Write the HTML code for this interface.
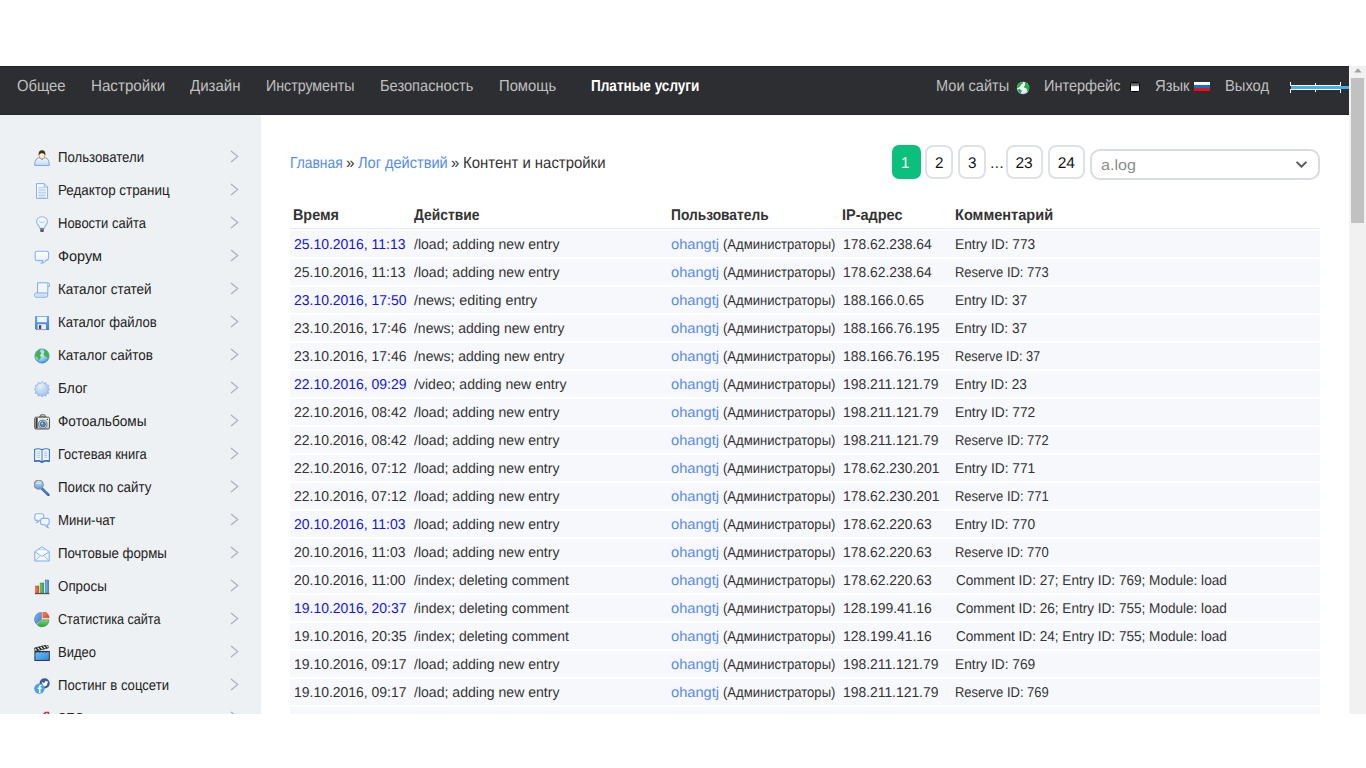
<!DOCTYPE html>
<html lang="ru"><head><meta charset="utf-8"><title>Лог действий</title>
<style>
html,body{margin:0;padding:0;background:#fff;overflow:hidden}
body{width:1366px;height:768px;position:relative;font-family:"Liberation Sans",sans-serif}
#vp{position:absolute;left:0;top:66px;width:1366px;height:648px;overflow:hidden;background:#fff}
#pg{position:absolute;left:0;top:-66px;width:1349px;height:900px}
.t{position:absolute;white-space:pre;line-height:20px;height:20px;transform-origin:0 50%;display:block;text-rendering:geometricPrecision}
#hdr{position:absolute;left:0;top:66px;width:1349px;height:48.5px;background:#2d2e32;box-shadow:inset 0 1px 0 #232427, inset 0 -1px 0 #26272a}
#side{position:absolute;left:0;top:114.5px;width:261px;height:700px;background:#eef1f3}
.rw{position:absolute;left:290px;width:1030px;background:#f7f8fc}
#thl{position:absolute;left:290px;width:1030px;top:228px;height:1px;background:#e6e8ee}
.chev{position:absolute;left:230px}
.pb{position:absolute;top:145px;height:30px;border:2px solid #dfe1e9;border-radius:8px;background:#fff;box-sizing:content-box}
#p1{position:absolute;left:892px;top:145px;width:29px;height:34px;border-radius:7px;background:#0bbf7d}
#sel{position:absolute;left:1090px;top:149px;width:225.5px;height:27px;border:2px solid #d9dbe3;border-radius:10px;background:#fff}
#sb{position:absolute;left:1349px;top:0;width:17px;height:648px;background:#f1f1f1;border-left:1px solid #f5f5f5;box-sizing:border-box}
#th{position:absolute;left:1351px;top:12px;width:13px;height:145px;background:#c1c1c1}
.ic{position:absolute}
</style></head><body>
<div id="vp"><div id="pg">
<div id="side"></div>
<div id="hdr"></div>
<div id="thl"></div><div class="rw" style="top:229px;height:2px;background:#fbfcfe"></div>
<div class="rw" style="top:231px;height:26px"></div>
<div class="rw" style="top:259px;height:26px"></div>
<div class="rw" style="top:287px;height:26px"></div>
<div class="rw" style="top:315px;height:26px"></div>
<div class="rw" style="top:343px;height:26px"></div>
<div class="rw" style="top:371px;height:26px"></div>
<div class="rw" style="top:399px;height:26px"></div>
<div class="rw" style="top:427px;height:26px"></div>
<div class="rw" style="top:455px;height:26px"></div>
<div class="rw" style="top:483px;height:26px"></div>
<div class="rw" style="top:511px;height:26px"></div>
<div class="rw" style="top:539px;height:26px"></div>
<div class="rw" style="top:567px;height:26px"></div>
<div class="rw" style="top:595px;height:26px"></div>
<div class="rw" style="top:623px;height:26px"></div>
<div class="rw" style="top:651px;height:26px"></div>
<div class="rw" style="top:679px;height:26px"></div>
<div class="rw" style="top:707px;height:26px"></div>
<svg class="chev" style="top:150.2px" width="9" height="13" viewBox="0 0 9 13"><path d="M1 0.9 L7.7 6.4 L1 11.9" fill="none" stroke="#adb0c0" stroke-width="1.3"/></svg>
<svg class="chev" style="top:183.2px" width="9" height="13" viewBox="0 0 9 13"><path d="M1 0.9 L7.7 6.4 L1 11.9" fill="none" stroke="#adb0c0" stroke-width="1.3"/></svg>
<svg class="chev" style="top:216.2px" width="9" height="13" viewBox="0 0 9 13"><path d="M1 0.9 L7.7 6.4 L1 11.9" fill="none" stroke="#adb0c0" stroke-width="1.3"/></svg>
<svg class="chev" style="top:249.2px" width="9" height="13" viewBox="0 0 9 13"><path d="M1 0.9 L7.7 6.4 L1 11.9" fill="none" stroke="#adb0c0" stroke-width="1.3"/></svg>
<svg class="chev" style="top:282.2px" width="9" height="13" viewBox="0 0 9 13"><path d="M1 0.9 L7.7 6.4 L1 11.9" fill="none" stroke="#adb0c0" stroke-width="1.3"/></svg>
<svg class="chev" style="top:315.2px" width="9" height="13" viewBox="0 0 9 13"><path d="M1 0.9 L7.7 6.4 L1 11.9" fill="none" stroke="#adb0c0" stroke-width="1.3"/></svg>
<svg class="chev" style="top:348.2px" width="9" height="13" viewBox="0 0 9 13"><path d="M1 0.9 L7.7 6.4 L1 11.9" fill="none" stroke="#adb0c0" stroke-width="1.3"/></svg>
<svg class="chev" style="top:381.2px" width="9" height="13" viewBox="0 0 9 13"><path d="M1 0.9 L7.7 6.4 L1 11.9" fill="none" stroke="#adb0c0" stroke-width="1.3"/></svg>
<svg class="chev" style="top:414.2px" width="9" height="13" viewBox="0 0 9 13"><path d="M1 0.9 L7.7 6.4 L1 11.9" fill="none" stroke="#adb0c0" stroke-width="1.3"/></svg>
<svg class="chev" style="top:447.2px" width="9" height="13" viewBox="0 0 9 13"><path d="M1 0.9 L7.7 6.4 L1 11.9" fill="none" stroke="#adb0c0" stroke-width="1.3"/></svg>
<svg class="chev" style="top:480.2px" width="9" height="13" viewBox="0 0 9 13"><path d="M1 0.9 L7.7 6.4 L1 11.9" fill="none" stroke="#adb0c0" stroke-width="1.3"/></svg>
<svg class="chev" style="top:513.2px" width="9" height="13" viewBox="0 0 9 13"><path d="M1 0.9 L7.7 6.4 L1 11.9" fill="none" stroke="#adb0c0" stroke-width="1.3"/></svg>
<svg class="chev" style="top:546.2px" width="9" height="13" viewBox="0 0 9 13"><path d="M1 0.9 L7.7 6.4 L1 11.9" fill="none" stroke="#adb0c0" stroke-width="1.3"/></svg>
<svg class="chev" style="top:579.2px" width="9" height="13" viewBox="0 0 9 13"><path d="M1 0.9 L7.7 6.4 L1 11.9" fill="none" stroke="#adb0c0" stroke-width="1.3"/></svg>
<svg class="chev" style="top:612.2px" width="9" height="13" viewBox="0 0 9 13"><path d="M1 0.9 L7.7 6.4 L1 11.9" fill="none" stroke="#adb0c0" stroke-width="1.3"/></svg>
<svg class="chev" style="top:645.2px" width="9" height="13" viewBox="0 0 9 13"><path d="M1 0.9 L7.7 6.4 L1 11.9" fill="none" stroke="#adb0c0" stroke-width="1.3"/></svg>
<svg class="chev" style="top:678.2px" width="9" height="13" viewBox="0 0 9 13"><path d="M1 0.9 L7.7 6.4 L1 11.9" fill="none" stroke="#adb0c0" stroke-width="1.3"/></svg>
<svg class="chev" style="top:711.2px" width="9" height="13" viewBox="0 0 9 13"><path d="M1 0.9 L7.7 6.4 L1 11.9" fill="none" stroke="#adb0c0" stroke-width="1.3"/></svg>
<div id="p1"></div>
<div class="pb" style="left:925px;width:24px"></div>
<div class="pb" style="left:958px;width:24px"></div>
<div class="pb" style="left:1006px;width:33px"></div>
<div class="pb" style="left:1048px;width:33px"></div>
<div id="sel"></div>
<svg class="ic" style="left:1295.4px;top:160px" width="13" height="9" viewBox="0 0 13 9"><path d="M1.6 1.9 L6.5 6.6 L11.4 1.9" fill="none" stroke="#555" stroke-width="1.9"/></svg>
<svg class="ic" style="left:1016px;top:81px" width="14" height="14" viewBox="0 0 14 14"><defs><radialGradient id="hg" cx="0.45" cy="0.4" r="0.65"><stop offset="0" stop-color="#ffffff"/><stop offset="0.7" stop-color="#e4e6fb"/><stop offset="1" stop-color="#b9bde6"/></radialGradient></defs>
<circle cx="7.1" cy="7" r="6.2" fill="url(#hg)"/>
<path d="M1.4 4.6 Q2.6 2 5 1.2 L6.4 1 Q7.6 1.6 6.6 2.6 L5 3.4 L4.4 5 L2.8 6.4 L1 7.2 Q0.9 5.8 1.4 4.6 Z" fill="#16b436"/>
<path d="M8.6 1.4 Q11 1.6 12.6 4 Q13.6 6.4 13 8.6 L12 10.4 L11 9.6 L10.6 7.6 L8.4 6.8 L8 5.4 L9.4 4 Z" fill="#16b436"/>
<path d="M1.6 8.6 L3.4 8 L5.4 9 L5.6 10.6 L4.6 12.4 Q2.6 11.4 1.6 8.6 Z" fill="#16b436"/></svg>
<svg class="ic" style="left:1130px;top:82px" width="10" height="10" viewBox="0 0 10 10"><defs><linearGradient id="wg" x1="0" y1="0" x2="0" y2="1"><stop offset="0" stop-color="#4c4c4c"/><stop offset="1" stop-color="#858585"/></linearGradient></defs>
<rect x="0.5" y="0.5" width="9" height="9" rx="1.2" fill="#fff" stroke="#000" stroke-width="1"/><rect x="1" y="1" width="8" height="3.2" fill="url(#wg)"/></svg>
<div class="ic" style="left:1194px;top:81.7px;width:16.2px;height:9.6px;background:linear-gradient(#fff 0,#fff 34%,#0d6fe0 34%,#0d6fe0 66%,#ff0a0a 66%,#ff0a0a 100%)"></div>
<div class="ic" style="left:1290px;top:82px;width:1.4px;height:11.2px;background:#fff"></div>
<div class="ic" style="left:1314.8px;top:82.8px;width:1.4px;height:9.4px;background:#fff"></div>
<div class="ic" style="left:1339.7px;top:82px;width:1.4px;height:11.2px;background:#fff"></div>
<div class="ic" style="left:1290px;top:85px;width:51px;height:5px;background:#fff"></div>
<div class="ic" style="left:1290px;top:86px;width:1.2px;height:3px;background:#2d2e32"></div>
<div class="ic" style="left:1291px;top:86px;width:60px;height:3px;background:#45b0ec"></div>
<svg class="ic" style="left:34px;top:150px" width="16" height="16" viewBox="0 0 16 16"><defs><linearGradient id="gu" x1="0" y1="0" x2="0" y2="1"><stop offset="0" stop-color="#f4f9ff"/><stop offset="1" stop-color="#c3dcf7"/></linearGradient></defs><path d="M0.7 15.4 L1.2 11.4 Q1.6 8.2 5 7.6 L8 9.6 L11 7.6 Q14.4 8.2 14.8 11.4 L15.3 15.4 Z" fill="url(#gu)" stroke="#7ba6e2" stroke-width="1"/>
<ellipse cx="8" cy="5.6" rx="2.9" ry="3.3" fill="#fdeee2" stroke="#e8853a" stroke-width="0.9"/>
<path d="M4.6 5.2 Q4.2 0.2 8 0.2 Q11.8 0.2 11.4 5.2 Q10.4 3 8 3.2 Q5.6 3 4.6 5.2 Z" fill="#3d3418"/></svg>
<svg class="ic" style="left:34px;top:183px" width="16" height="16" viewBox="0 0 16 16"><path d="M2.5 0.6 H10.2 L13.6 4 V15.4 H2.5 Z" fill="#f6fafe" stroke="#79a8e4" stroke-width="0.9"/>
<path d="M10.2 0.6 V4 H13.6" fill="#dbe9fa" stroke="#79a8e4" stroke-width="0.8"/>
<path d="M4.3 4.6 H9.4 M4.3 6.2 H11.8 M4.3 7.8 H11.8 M4.3 9.4 H11.8 M4.3 11 H11.8 M4.3 12.6 H11.8 M4.3 14.1 H11.8" stroke="#a4c4ec" stroke-width="0.8"/></svg>
<svg class="ic" style="left:34px;top:216px" width="16" height="16" viewBox="0 0 16 16"><path d="M8 0.7 C4.4 0.7 2.6 3.2 2.6 5.8 C2.6 8.6 5.4 9.6 5.9 12.2 H10.1 C10.6 9.6 13.4 8.6 13.4 5.8 C13.4 3.2 11.6 0.7 8 0.7 Z" fill="#f2f8ff" stroke="#86b4ee" stroke-width="1.1"/>
<path d="M5.2 5.6 Q8 8 10.8 5.6" fill="none" stroke="#9cc3f2" stroke-width="0.9"/>
<rect x="6" y="12.2" width="4" height="2.4" fill="#a8a8a8"/><rect x="6.4" y="14.2" width="3.2" height="1.6" fill="#333"/>
<path d="M6 12.6 H10 M6 13.8 H10" stroke="#555" stroke-width="0.6"/></svg>
<svg class="ic" style="left:34px;top:249px" width="16" height="16" viewBox="0 0 16 16"><defs><linearGradient id="gb" x1="0" y1="0" x2="0" y2="1"><stop offset="0" stop-color="#ffffff"/><stop offset="1" stop-color="#dcebfb"/></linearGradient></defs><path transform="translate(0,0.8)" d="M3.4 1.4 H12.6 Q14.6 1.4 14.6 3.6 V7.6 Q14.6 10.2 12 10.6 Q11 13 7.6 13.4 Q9 12 8.8 10.8 H3.4 Q1.2 10.8 1.2 8.4 V3.6 Q1.2 1.4 3.4 1.4 Z" fill="url(#gb)" stroke="#86b4ee" stroke-width="1.1"/></svg>
<svg class="ic" style="left:34px;top:282px" width="16" height="16" viewBox="0 0 16 16"><path d="M3.6 0.8 H13.6 Q15.6 0.8 15.6 2.8 V4.4 H13.8 V11.4 H3.6 Z" fill="#f2f7fe" stroke="#7fabea" stroke-width="1"/>
<path d="M13.8 1.2 V4.4" stroke="#7fabea" stroke-width="0.9"/>
<path d="M1.8 11 H12.2 Q13.8 11 13.8 12.9 Q13.8 15.2 12 15.2 H2 Q0.6 15.2 0.6 13.2 Q0.6 11 1.8 11 Z" fill="#e6f0fc" stroke="#7fabea" stroke-width="1"/>
<path d="M2 13.1 H12" stroke="#a9c8f0" stroke-width="0.8"/></svg>
<svg class="ic" style="left:34px;top:315px" width="16" height="16" viewBox="0 0 16 16"><defs><linearGradient id="gf" x1="0" y1="0" x2="0" y2="1"><stop offset="0" stop-color="#6fa6e4"/><stop offset="1" stop-color="#3f7fcf"/></linearGradient></defs><path d="M1 1 H15.1 V15 H2.4 L1 13.6 Z" fill="url(#gf)"/>
<rect x="3.2" y="1.8" width="9.6" height="5.4" fill="#eef5fd"/>
<rect x="3.6" y="9.2" width="8.4" height="5.8" fill="#ececec"/>
<rect x="5" y="10.2" width="2.2" height="4" fill="#2a4a78"/>
<path d="M3.6 14.6 H12.2" stroke="#8a8a8a" stroke-width="0.8"/></svg>
<svg class="ic" style="left:34px;top:348px" width="16" height="16" viewBox="0 0 16 16"><defs><radialGradient id="gg" cx="0.4" cy="0.35" r="0.7"><stop offset="0" stop-color="#d6f0fc"/><stop offset="0.6" stop-color="#8ccaee"/><stop offset="1" stop-color="#3f94d3"/></radialGradient></defs><circle cx="8" cy="8" r="7.1" fill="url(#gg)" stroke="#3b7fb8" stroke-width="0.7"/>
<path d="M2.2 4.4 Q4.2 1.6 7 1.2 L6 3.6 L7.6 5.2 L6 7.2 L7 9.4 L4.8 12.4 L3.6 9.6 L1.4 8.6 Q1.2 6 2.2 4.4 Z" fill="#45b245"/>
<path d="M9.6 1.2 Q13 2 14.6 5.6 Q15.4 8.4 14.2 10.8 L12.6 8.8 L10.8 8.2 L9.6 5.8 L10.6 4 Z" fill="#45b245"/>
<path d="M6.4 14.8 Q9 12.6 11.8 13.8 Q9.4 15.6 6.4 14.8 Z" fill="#3a8fcc"/></svg>
<svg class="ic" style="left:34px;top:381px" width="16" height="16" viewBox="0 0 16 16"><defs><radialGradient id="gs" cx="0.4" cy="0.3" r="0.8"><stop offset="0" stop-color="#e8f0fb"/><stop offset="0.75" stop-color="#a9c5ec"/><stop offset="1" stop-color="#8db2e7"/></radialGradient></defs><polygon points="15.80,8.30 13.89,9.88 14.75,12.20 12.31,12.61 11.90,15.05 9.58,14.19 8.00,16.10 6.42,14.19 4.10,15.05 3.69,12.61 1.25,12.20 2.11,9.88 0.20,8.30 2.11,6.72 1.25,4.40 3.69,3.99 4.10,1.55 6.42,2.41 8.00,0.50 9.58,2.41 11.90,1.55 12.31,3.99 14.75,4.40 13.89,6.72" fill="url(#gs)" stroke="#86ace4" stroke-width="0.7"/></svg>
<svg class="ic" style="left:34px;top:414px" width="16" height="16" viewBox="0 0 16 16"><defs><linearGradient id="gc" x1="0" y1="0" x2="0" y2="1"><stop offset="0" stop-color="#f6f6f6"/><stop offset="1" stop-color="#c4c4c4"/></linearGradient></defs><path d="M5.6 2.8 L6.8 0.8 H10.6 L11.8 2.8 Z" fill="#dcdcdc" stroke="#444" stroke-width="0.8"/>
<rect x="0.7" y="3.2" width="14.8" height="11.8" rx="1.2" fill="url(#gc)" stroke="#444" stroke-width="0.9"/>
<rect x="1.6" y="4" width="2" height="10.2" fill="#3a3a3a"/>
<circle cx="8.8" cy="10.2" r="4.1" fill="#e8e8e8" stroke="#555" stroke-width="0.8"/>
<circle cx="8.8" cy="10.2" r="2.6" fill="#3d86d8" stroke="#234f86" stroke-width="0.7"/>
<circle cx="8.2" cy="9.5" r="0.9" fill="#bfe0ff"/>
<circle cx="13.4" cy="5.4" r="0.7" fill="#444"/></svg>
<svg class="ic" style="left:34px;top:447px" width="16" height="16" viewBox="0 0 16 16"><g transform="translate(0,0.8)"><path d="M0.6 1.6 Q4.6 0 8 2 Q11.4 0 15.4 1.6 V13.4 Q11.4 12 8 14 Q4.6 12 0.6 13.4 Z" fill="#f4f8fe" stroke="#3c78c2" stroke-width="1.1"/>
<path d="M8 2 V14" stroke="#3c78c2" stroke-width="1"/>
<path d="M2.6 4 H6.2 M2.6 5.8 H6.2 M2.6 7.6 H6.2 M2.6 9.4 H6.2 M9.8 4 H13.4 M9.8 5.8 H13.4 M9.8 7.6 H13.4 M9.8 9.4 H13.4" stroke="#a9c3e6" stroke-width="0.9"/>
<path d="M0.6 13.6 Q4.6 12.4 8 14.6 Q11.4 12.4 15.4 13.6" fill="none" stroke="#2f66ad" stroke-width="1.2"/></g></svg>
<svg class="ic" style="left:34px;top:480px" width="16" height="16" viewBox="0 0 16 16"><defs><linearGradient id="gm" x1="0" y1="0" x2="0" y2="1"><stop offset="0" stop-color="#cfe4fb"/><stop offset="1" stop-color="#5b9bee"/></linearGradient></defs><g transform="translate(-0.6,-0.9)"><path d="M8.4 9.4 L15 15.8" stroke="#2d69ad" stroke-width="2.6" stroke-linecap="round"/>
<path d="M8.8 9.8 L13.6 14.2" stroke="#6aa5e0" stroke-width="0.8" stroke-linecap="round"/>
<circle cx="5.3" cy="5.6" r="4.5" fill="url(#gm)" stroke="#8c8c8c" stroke-width="1.2"/>
<path d="M2.6 5 Q5.2 2.2 8 5" fill="#e4f1ff" opacity="0.85"/></g></svg>
<svg class="ic" style="left:34px;top:513px" width="16" height="16" viewBox="0 0 16 16"><path d="M2.8 0.8 H7.6 Q9.6 0.8 9.6 2.8 V5.4 Q9.6 7.4 7.6 7.4 H5.4 Q5 9 3 9.4 Q3.8 8.4 3.6 7.4 H2.8 Q0.8 7.4 0.8 5.4 V2.8 Q0.8 0.8 2.8 0.8 Z" fill="#f4f9ff" stroke="#86b4ee" stroke-width="1.1"/>
<path d="M8.6 5.4 H13.2 Q15.2 5.4 15.2 7.4 V9.8 Q15.2 11.8 13.2 11.8 Q13.2 13.4 14.2 14.6 Q11.8 14 11 11.8 H8.6 Q6.6 11.8 6.6 9.8 V7.4 Q6.6 5.4 8.6 5.4 Z" fill="#eef5fe" stroke="#86b4ee" stroke-width="1.1"/></svg>
<svg class="ic" style="left:34px;top:546px" width="16" height="16" viewBox="0 0 16 16"><path d="M0.8 5.6 L8 0.8 L15.2 5.6 V15 H0.8 Z" fill="#f1f7fe" stroke="#7fabea" stroke-width="1"/>
<path d="M2.8 6.8 V3.8 H13.2 V6.8" fill="#ffffff" stroke="#9cc0f0" stroke-width="0.8"/>
<path d="M0.8 5.8 L8 10.4 L15.2 5.8" fill="#f8fbff" stroke="#7fabea" stroke-width="0.9"/>
<path d="M0.8 15 L6.4 9.4 M15.2 15 L9.6 9.4" stroke="#8fb6ec" stroke-width="0.9"/></svg>
<svg class="ic" style="left:34px;top:579px" width="16" height="16" viewBox="0 0 16 16"><defs><linearGradient id="br" x1="0" y1="0" x2="1" y2="0"><stop offset="0" stop-color="#ff8a5c"/><stop offset="1" stop-color="#e4381a"/></linearGradient>
<linearGradient id="bg" x1="0" y1="0" x2="1" y2="0"><stop offset="0" stop-color="#7ad27a"/><stop offset="1" stop-color="#2f9a35"/></linearGradient>
<linearGradient id="bb" x1="0" y1="0" x2="1" y2="0"><stop offset="0" stop-color="#8fbcf0"/><stop offset="1" stop-color="#3f7fcf"/></linearGradient></defs><rect x="1.4" y="7" width="3.4" height="7" fill="url(#br)" stroke="#c83a1a" stroke-width="0.5"/>
<rect x="6.1" y="4" width="3.7" height="10" fill="url(#bg)" stroke="#2e8a2e" stroke-width="0.5"/>
<rect x="11.2" y="1" width="3.5" height="13" fill="url(#bb)" stroke="#2f66ad" stroke-width="0.5"/>
<rect x="0.8" y="14" width="14.6" height="1.2" fill="#555"/></svg>
<svg class="ic" style="left:34px;top:612px" width="16" height="16" viewBox="0 0 16 16"><defs><linearGradient id="pb" x1="0" y1="0" x2="1" y2="1"><stop offset="0" stop-color="#8db6ea"/><stop offset="1" stop-color="#3f78c8"/></linearGradient>
<linearGradient id="pr" x1="0" y1="0" x2="1" y2="1"><stop offset="0" stop-color="#ff8f66"/><stop offset="1" stop-color="#e43a1c"/></linearGradient>
<linearGradient id="pgn" x1="0" y1="0" x2="0" y2="1"><stop offset="0" stop-color="#7fd67f"/><stop offset="1" stop-color="#2f9a35"/></linearGradient></defs><g transform="translate(0,-1.2)"><path d="M7.4 8.6 V1.6 A7 7 0 0 0 2.2 13.2 Z" fill="url(#pb)" stroke="#3c70b8" stroke-width="0.5"/>
<path d="M8.8 7 V0.8 A6.6 6.6 0 0 1 15.2 7 Z" fill="url(#pr)" stroke="#d03a1c" stroke-width="0.5"/>
<path d="M8 9 H15 A7 7 0 0 1 3 14 Z" fill="url(#pgn)" stroke="#2f8f35" stroke-width="0.5"/></g></svg>
<svg class="ic" style="left:34px;top:645px" width="16" height="16" viewBox="0 0 16 16"><defs><linearGradient id="cl" x1="0" y1="0" x2="1" y2="1"><stop offset="0" stop-color="#6fc0fa"/><stop offset="1" stop-color="#2f86e0"/></linearGradient></defs><g transform="rotate(-14 1.2 6.2)"><rect x="1.2" y="3" width="13.6" height="3.2" fill="#fff" stroke="#222" stroke-width="0.7"/>
<path d="M2.6 3 L4.6 6.2 M5.6 3 L7.6 6.2 M8.6 3 L10.6 6.2 M11.6 3 L13.6 6.2" stroke="#222" stroke-width="1.5"/></g>
<rect x="0.9" y="6.4" width="14.4" height="9" fill="url(#cl)" stroke="#222" stroke-width="0.9"/>
<path d="M1.4 8.6 H14.8" stroke="#1a1a1a" stroke-width="0.5" opacity="0.0"/>
<path d="M1.6 6.9 H14.6" stroke="#222" stroke-width="1.4" stroke-dasharray="1.7 1.5"/></svg>
<svg class="ic" style="left:34px;top:678px" width="16" height="16" viewBox="0 0 16 16"><circle cx="10.6" cy="5.4" r="5.1" fill="#3b5a9a"/>
<path d="M7.8 3.4 Q9 5 10.6 5 Q10.4 3.2 12 3 Q12.8 3 13.2 3.5 L14 3.2 L13.6 4 L14.2 4.2 L13.5 4.7 Q13.4 7.8 10.6 8.4 Q8.8 8.6 7.6 7.8 Q8.8 7.8 9.4 7.2 Q8.4 7 8.2 6.2 H8.8 Q7.8 5.6 7.8 3.4 Z" fill="#fff"/>
<circle cx="5.4" cy="10.6" r="5.2" fill="#4aa3e2"/>
<path d="M4.9 15 V10.9 H3.6 V9.5 H4.9 V8.5 Q4.9 6.7 6.7 6.7 H7.7 V8.1 H7 Q6.5 8.1 6.5 8.7 V9.5 H7.7 L7.5 10.9 H6.5 V15 Z" fill="#fff"/></svg>
<svg class="ic" style="left:34px;top:711px" width="16" height="16" viewBox="0 0 16 16"><path d="M7.6 4.4 L11.2 0.8 L15.2 0.8 L15.2 5 L11.6 8.4 Z" fill="#d8283a"/><circle cx="12.8" cy="3.2" r="1.1" fill="#fff"/>
<path d="M7.8 4.2 L4 4.6 L2 7 L6 7.4 Z" fill="#8a8a8a"/></svg>
<span class="t" style="left:16.85px;top:77px;font-size:16px;color:#c0c0c0;transform:scaleX(0.9276)">Общее</span>
<span class="t" style="left:90.68px;top:77px;font-size:16px;color:#c0c0c0;transform:scaleX(0.9468)">Настройки</span>
<span class="t" style="left:190.00px;top:77px;font-size:16px;color:#c0c0c0;transform:scaleX(0.9398)">Дизайн</span>
<span class="t" style="left:265.55px;top:77px;font-size:16px;color:#c0c0c0;transform:scaleX(0.8873)">Инструменты</span>
<span class="t" style="left:379.72px;top:77px;font-size:16px;color:#c0c0c0;transform:scaleX(0.9141)">Безопасность</span>
<span class="t" style="left:498.71px;top:77px;font-size:16px;color:#c0c0c0;transform:scaleX(0.9244)">Помощь</span>
<span class="t" style="left:591.15px;top:77px;font-size:16px;color:#ffffff;transform:scaleX(0.8477);font-weight:700">Платные услуги</span>
<span class="t" style="left:935.63px;top:77px;font-size:16px;color:#c0c0c0;transform:scaleX(0.9104)">Мои сайты</span>
<span class="t" style="left:1043.93px;top:77px;font-size:16px;color:#c0c0c0;transform:scaleX(0.9069)">Интерфейс</span>
<span class="t" style="left:1155.08px;top:77px;font-size:16px;color:#c0c0c0;transform:scaleX(0.9235)">Язык</span>
<span class="t" style="left:1225.31px;top:77px;font-size:16px;color:#c0c0c0;transform:scaleX(0.9199)">Выход</span>
<span class="t" style="left:289.98px;top:154px;font-size:16px;color:#588bee;transform:scaleX(0.8654)">Главная</span>
<span class="t" style="left:345.97px;top:154px;font-size:16px;color:#333;transform:scaleX(0.9499)">»</span>
<span class="t" style="left:358.40px;top:154px;font-size:16px;color:#588bee;transform:scaleX(0.9104)">Лог действий</span>
<span class="t" style="left:451.49px;top:154px;font-size:16px;color:#333;transform:scaleX(0.9235)">»</span>
<span class="t" style="left:463.10px;top:154px;font-size:16px;color:#333;transform:scaleX(0.9322)">Контент и настройки</span>
<span class="t" style="left:57.65px;top:148px;font-size:14.5px;color:#222;transform:scaleX(0.9094)">Пользователи</span>
<span class="t" style="left:57.62px;top:181px;font-size:14.5px;color:#222;transform:scaleX(0.9229)">Редактор страниц</span>
<span class="t" style="left:57.64px;top:214px;font-size:14.5px;color:#222;transform:scaleX(0.8966)">Новости сайта</span>
<span class="t" style="left:57.85px;top:247px;font-size:14.5px;color:#222;transform:scaleX(0.9989)">Форум</span>
<span class="t" style="left:57.61px;top:280px;font-size:14.5px;color:#222;transform:scaleX(0.9279)">Каталог статей</span>
<span class="t" style="left:57.63px;top:313px;font-size:14.5px;color:#222;transform:scaleX(0.9034)">Каталог файлов</span>
<span class="t" style="left:57.61px;top:346px;font-size:14.5px;color:#222;transform:scaleX(0.9254)">Каталог сайтов</span>
<span class="t" style="left:57.59px;top:379px;font-size:14.5px;color:#222;transform:scaleX(0.9445)">Блог</span>
<span class="t" style="left:57.89px;top:412px;font-size:14.5px;color:#222;transform:scaleX(0.9404)">Фотоальбомы</span>
<span class="t" style="left:57.65px;top:445px;font-size:14.5px;color:#222;transform:scaleX(0.8899)">Гостевая книга</span>
<span class="t" style="left:57.64px;top:478px;font-size:14.5px;color:#222;transform:scaleX(0.9189)">Поиск по сайту</span>
<span class="t" style="left:57.63px;top:511px;font-size:14.5px;color:#222;transform:scaleX(0.9098)">Мини-чат</span>
<span class="t" style="left:57.65px;top:544px;font-size:14.5px;color:#222;transform:scaleX(0.9148)">Почтовые формы</span>
<span class="t" style="left:58.01px;top:577px;font-size:14.5px;color:#222;transform:scaleX(0.9210)">Опросы</span>
<span class="t" style="left:57.99px;top:610px;font-size:14.5px;color:#222;transform:scaleX(0.8671)">Статистика сайта</span>
<span class="t" style="left:57.64px;top:643px;font-size:14.5px;color:#222;transform:scaleX(0.8983)">Видео</span>
<span class="t" style="left:57.66px;top:676px;font-size:14.5px;color:#222;transform:scaleX(0.9044)">Постинг в соцсети</span>
<span class="t" style="left:57.71px;top:709px;font-size:14.5px;color:#222;transform:scaleX(0.8606)">SEO-модуль</span>
<span class="t" style="left:293.17px;top:206px;font-size:15.5px;color:#333;transform:scaleX(0.9268);font-weight:700">Время</span>
<span class="t" style="left:413.80px;top:206px;font-size:15.5px;color:#333;transform:scaleX(0.8932);font-weight:700">Действие</span>
<span class="t" style="left:670.51px;top:206px;font-size:15.5px;color:#333;transform:scaleX(0.8879);font-weight:700">Пользователь</span>
<span class="t" style="left:842.37px;top:206px;font-size:15.5px;color:#333;transform:scaleX(0.9341);font-weight:700">IP-адрес</span>
<span class="t" style="left:955.16px;top:206px;font-size:15.5px;color:#333;transform:scaleX(0.9403);font-weight:700">Комментарий</span>
<span class="t" style="left:294.27px;top:235px;font-size:14.25px;color:#1212ee;transform:scaleX(0.9786)">25.10.2016, 11:13</span>
<span class="t" style="left:413.57px;top:235px;font-size:14.25px;color:#333;transform:scaleX(0.9873)">/load; adding new entry</span>
<span class="t" style="left:671.16px;top:235px;font-size:14.25px;color:#588bee;transform:scaleX(1.0262)">ohangtj</span>
<span class="t" style="left:722.78px;top:235px;font-size:14.25px;color:#333;transform:scaleX(0.9171)">(Администраторы)</span>
<span class="t" style="left:843.43px;top:235px;font-size:14.25px;color:#333;transform:scaleX(0.9735)">178.62.238.64</span>
<span class="t" style="left:955.40px;top:235px;font-size:14.25px;color:#333;transform:scaleX(0.9645)">Entry ID: 773</span>
<span class="t" style="left:294.27px;top:263px;font-size:14.25px;color:#333;transform:scaleX(0.9786)">25.10.2016, 11:13</span>
<span class="t" style="left:413.57px;top:263px;font-size:14.25px;color:#333;transform:scaleX(0.9873)">/load; adding new entry</span>
<span class="t" style="left:671.16px;top:263px;font-size:14.25px;color:#588bee;transform:scaleX(1.0262)">ohangtj</span>
<span class="t" style="left:722.78px;top:263px;font-size:14.25px;color:#333;transform:scaleX(0.9171)">(Администраторы)</span>
<span class="t" style="left:843.43px;top:263px;font-size:14.25px;color:#333;transform:scaleX(0.9735)">178.62.238.64</span>
<span class="t" style="left:955.45px;top:263px;font-size:14.25px;color:#333;transform:scaleX(0.9102)">Reserve ID: 773</span>
<span class="t" style="left:294.27px;top:291px;font-size:14.25px;color:#1212ee;transform:scaleX(0.9786)">23.10.2016, 17:50</span>
<span class="t" style="left:413.56px;top:291px;font-size:14.25px;color:#333;transform:scaleX(1.0037)">/news; editing entry</span>
<span class="t" style="left:671.16px;top:291px;font-size:14.25px;color:#588bee;transform:scaleX(1.0262)">ohangtj</span>
<span class="t" style="left:722.78px;top:291px;font-size:14.25px;color:#333;transform:scaleX(0.9171)">(Администраторы)</span>
<span class="t" style="left:843.43px;top:291px;font-size:14.25px;color:#333;transform:scaleX(0.9735)">188.166.0.65</span>
<span class="t" style="left:955.40px;top:291px;font-size:14.25px;color:#333;transform:scaleX(0.9583)">Entry ID: 37</span>
<span class="t" style="left:294.27px;top:319px;font-size:14.25px;color:#333;transform:scaleX(0.9786)">23.10.2016, 17:46</span>
<span class="t" style="left:413.57px;top:319px;font-size:14.25px;color:#333;transform:scaleX(0.9786)">/news; adding new entry</span>
<span class="t" style="left:671.16px;top:319px;font-size:14.25px;color:#588bee;transform:scaleX(1.0262)">ohangtj</span>
<span class="t" style="left:722.78px;top:319px;font-size:14.25px;color:#333;transform:scaleX(0.9171)">(Администраторы)</span>
<span class="t" style="left:843.43px;top:319px;font-size:14.25px;color:#333;transform:scaleX(0.9735)">188.166.76.195</span>
<span class="t" style="left:955.40px;top:319px;font-size:14.25px;color:#333;transform:scaleX(0.9583)">Entry ID: 37</span>
<span class="t" style="left:294.27px;top:347px;font-size:14.25px;color:#333;transform:scaleX(0.9786)">23.10.2016, 17:46</span>
<span class="t" style="left:413.57px;top:347px;font-size:14.25px;color:#333;transform:scaleX(0.9786)">/news; adding new entry</span>
<span class="t" style="left:671.16px;top:347px;font-size:14.25px;color:#588bee;transform:scaleX(1.0262)">ohangtj</span>
<span class="t" style="left:722.78px;top:347px;font-size:14.25px;color:#333;transform:scaleX(0.9171)">(Администраторы)</span>
<span class="t" style="left:843.43px;top:347px;font-size:14.25px;color:#333;transform:scaleX(0.9735)">188.166.76.195</span>
<span class="t" style="left:955.47px;top:347px;font-size:14.25px;color:#333;transform:scaleX(0.8964)">Reserve ID: 37</span>
<span class="t" style="left:294.27px;top:375px;font-size:14.25px;color:#1212ee;transform:scaleX(0.9786)">22.10.2016, 09:29</span>
<span class="t" style="left:413.57px;top:375px;font-size:14.25px;color:#333;transform:scaleX(0.9866)">/video; adding new entry</span>
<span class="t" style="left:671.16px;top:375px;font-size:14.25px;color:#588bee;transform:scaleX(1.0262)">ohangtj</span>
<span class="t" style="left:722.78px;top:375px;font-size:14.25px;color:#333;transform:scaleX(0.9171)">(Администраторы)</span>
<span class="t" style="left:843.43px;top:375px;font-size:14.25px;color:#333;transform:scaleX(0.9735)">198.211.121.79</span>
<span class="t" style="left:955.41px;top:375px;font-size:14.25px;color:#333;transform:scaleX(0.9552)">Entry ID: 23</span>
<span class="t" style="left:294.27px;top:403px;font-size:14.25px;color:#333;transform:scaleX(0.9786)">22.10.2016, 08:42</span>
<span class="t" style="left:413.57px;top:403px;font-size:14.25px;color:#333;transform:scaleX(0.9873)">/load; adding new entry</span>
<span class="t" style="left:671.16px;top:403px;font-size:14.25px;color:#588bee;transform:scaleX(1.0262)">ohangtj</span>
<span class="t" style="left:722.78px;top:403px;font-size:14.25px;color:#333;transform:scaleX(0.9171)">(Администраторы)</span>
<span class="t" style="left:843.43px;top:403px;font-size:14.25px;color:#333;transform:scaleX(0.9735)">198.211.121.79</span>
<span class="t" style="left:955.40px;top:403px;font-size:14.25px;color:#333;transform:scaleX(0.9652)">Entry ID: 772</span>
<span class="t" style="left:294.27px;top:431px;font-size:14.25px;color:#333;transform:scaleX(0.9786)">22.10.2016, 08:42</span>
<span class="t" style="left:413.57px;top:431px;font-size:14.25px;color:#333;transform:scaleX(0.9873)">/load; adding new entry</span>
<span class="t" style="left:671.16px;top:431px;font-size:14.25px;color:#588bee;transform:scaleX(1.0262)">ohangtj</span>
<span class="t" style="left:722.78px;top:431px;font-size:14.25px;color:#333;transform:scaleX(0.9171)">(Администраторы)</span>
<span class="t" style="left:843.43px;top:431px;font-size:14.25px;color:#333;transform:scaleX(0.9735)">198.211.121.79</span>
<span class="t" style="left:955.45px;top:431px;font-size:14.25px;color:#333;transform:scaleX(0.9105)">Reserve ID: 772</span>
<span class="t" style="left:294.27px;top:459px;font-size:14.25px;color:#333;transform:scaleX(0.9786)">22.10.2016, 07:12</span>
<span class="t" style="left:413.57px;top:459px;font-size:14.25px;color:#333;transform:scaleX(0.9873)">/load; adding new entry</span>
<span class="t" style="left:671.16px;top:459px;font-size:14.25px;color:#588bee;transform:scaleX(1.0262)">ohangtj</span>
<span class="t" style="left:722.78px;top:459px;font-size:14.25px;color:#333;transform:scaleX(0.9171)">(Администраторы)</span>
<span class="t" style="left:843.43px;top:459px;font-size:14.25px;color:#333;transform:scaleX(0.9735)">178.62.230.201</span>
<span class="t" style="left:955.40px;top:459px;font-size:14.25px;color:#333;transform:scaleX(0.9646)">Entry ID: 771</span>
<span class="t" style="left:294.27px;top:487px;font-size:14.25px;color:#333;transform:scaleX(0.9786)">22.10.2016, 07:12</span>
<span class="t" style="left:413.57px;top:487px;font-size:14.25px;color:#333;transform:scaleX(0.9873)">/load; adding new entry</span>
<span class="t" style="left:671.16px;top:487px;font-size:14.25px;color:#588bee;transform:scaleX(1.0262)">ohangtj</span>
<span class="t" style="left:722.78px;top:487px;font-size:14.25px;color:#333;transform:scaleX(0.9171)">(Администраторы)</span>
<span class="t" style="left:843.43px;top:487px;font-size:14.25px;color:#333;transform:scaleX(0.9735)">178.62.230.201</span>
<span class="t" style="left:955.45px;top:487px;font-size:14.25px;color:#333;transform:scaleX(0.9104)">Reserve ID: 771</span>
<span class="t" style="left:294.27px;top:515px;font-size:14.25px;color:#1212ee;transform:scaleX(0.9786)">20.10.2016, 11:03</span>
<span class="t" style="left:413.57px;top:515px;font-size:14.25px;color:#333;transform:scaleX(0.9873)">/load; adding new entry</span>
<span class="t" style="left:671.16px;top:515px;font-size:14.25px;color:#588bee;transform:scaleX(1.0262)">ohangtj</span>
<span class="t" style="left:722.78px;top:515px;font-size:14.25px;color:#333;transform:scaleX(0.9171)">(Администраторы)</span>
<span class="t" style="left:843.43px;top:515px;font-size:14.25px;color:#333;transform:scaleX(0.9735)">178.62.220.63</span>
<span class="t" style="left:955.40px;top:515px;font-size:14.25px;color:#333;transform:scaleX(0.9632)">Entry ID: 770</span>
<span class="t" style="left:294.27px;top:543px;font-size:14.25px;color:#333;transform:scaleX(0.9786)">20.10.2016, 11:03</span>
<span class="t" style="left:413.57px;top:543px;font-size:14.25px;color:#333;transform:scaleX(0.9873)">/load; adding new entry</span>
<span class="t" style="left:671.16px;top:543px;font-size:14.25px;color:#588bee;transform:scaleX(1.0262)">ohangtj</span>
<span class="t" style="left:722.78px;top:543px;font-size:14.25px;color:#333;transform:scaleX(0.9171)">(Администраторы)</span>
<span class="t" style="left:843.43px;top:543px;font-size:14.25px;color:#333;transform:scaleX(0.9735)">178.62.220.63</span>
<span class="t" style="left:955.45px;top:543px;font-size:14.25px;color:#333;transform:scaleX(0.9091)">Reserve ID: 770</span>
<span class="t" style="left:294.27px;top:571px;font-size:14.25px;color:#333;transform:scaleX(0.9786)">20.10.2016, 11:00</span>
<span class="t" style="left:413.57px;top:571px;font-size:14.25px;color:#333;transform:scaleX(0.9783)">/index; deleting comment</span>
<span class="t" style="left:671.16px;top:571px;font-size:14.25px;color:#588bee;transform:scaleX(1.0262)">ohangtj</span>
<span class="t" style="left:722.78px;top:571px;font-size:14.25px;color:#333;transform:scaleX(0.9171)">(Администраторы)</span>
<span class="t" style="left:843.43px;top:571px;font-size:14.25px;color:#333;transform:scaleX(0.9735)">178.62.220.63</span>
<span class="t" style="left:955.73px;top:571px;font-size:14.25px;color:#333;transform:scaleX(0.9523)">Comment ID: 27; Entry ID: 769; Module: load</span>
<span class="t" style="left:294.27px;top:599px;font-size:14.25px;color:#1212ee;transform:scaleX(0.9786)">19.10.2016, 20:37</span>
<span class="t" style="left:413.57px;top:599px;font-size:14.25px;color:#333;transform:scaleX(0.9783)">/index; deleting comment</span>
<span class="t" style="left:671.16px;top:599px;font-size:14.25px;color:#588bee;transform:scaleX(1.0262)">ohangtj</span>
<span class="t" style="left:722.78px;top:599px;font-size:14.25px;color:#333;transform:scaleX(0.9171)">(Администраторы)</span>
<span class="t" style="left:843.43px;top:599px;font-size:14.25px;color:#333;transform:scaleX(0.9735)">128.199.41.16</span>
<span class="t" style="left:955.73px;top:599px;font-size:14.25px;color:#333;transform:scaleX(0.9523)">Comment ID: 26; Entry ID: 755; Module: load</span>
<span class="t" style="left:294.27px;top:627px;font-size:14.25px;color:#333;transform:scaleX(0.9786)">19.10.2016, 20:35</span>
<span class="t" style="left:413.57px;top:627px;font-size:14.25px;color:#333;transform:scaleX(0.9783)">/index; deleting comment</span>
<span class="t" style="left:671.16px;top:627px;font-size:14.25px;color:#588bee;transform:scaleX(1.0262)">ohangtj</span>
<span class="t" style="left:722.78px;top:627px;font-size:14.25px;color:#333;transform:scaleX(0.9171)">(Администраторы)</span>
<span class="t" style="left:843.43px;top:627px;font-size:14.25px;color:#333;transform:scaleX(0.9735)">128.199.41.16</span>
<span class="t" style="left:955.73px;top:627px;font-size:14.25px;color:#333;transform:scaleX(0.9523)">Comment ID: 24; Entry ID: 755; Module: load</span>
<span class="t" style="left:294.27px;top:655px;font-size:14.25px;color:#333;transform:scaleX(0.9786)">19.10.2016, 09:17</span>
<span class="t" style="left:413.57px;top:655px;font-size:14.25px;color:#333;transform:scaleX(0.9873)">/load; adding new entry</span>
<span class="t" style="left:671.16px;top:655px;font-size:14.25px;color:#588bee;transform:scaleX(1.0262)">ohangtj</span>
<span class="t" style="left:722.78px;top:655px;font-size:14.25px;color:#333;transform:scaleX(0.9171)">(Администраторы)</span>
<span class="t" style="left:843.43px;top:655px;font-size:14.25px;color:#333;transform:scaleX(0.9735)">198.211.121.79</span>
<span class="t" style="left:955.40px;top:655px;font-size:14.25px;color:#333;transform:scaleX(0.9651)">Entry ID: 769</span>
<span class="t" style="left:294.27px;top:683px;font-size:14.25px;color:#333;transform:scaleX(0.9786)">19.10.2016, 09:17</span>
<span class="t" style="left:413.57px;top:683px;font-size:14.25px;color:#333;transform:scaleX(0.9873)">/load; adding new entry</span>
<span class="t" style="left:671.16px;top:683px;font-size:14.25px;color:#588bee;transform:scaleX(1.0262)">ohangtj</span>
<span class="t" style="left:722.78px;top:683px;font-size:14.25px;color:#333;transform:scaleX(0.9171)">(Администраторы)</span>
<span class="t" style="left:843.43px;top:683px;font-size:14.25px;color:#333;transform:scaleX(0.9735)">198.211.121.79</span>
<span class="t" style="left:955.45px;top:683px;font-size:14.25px;color:#333;transform:scaleX(0.9104)">Reserve ID: 769</span>
<span class="t" style="left:901.26px;top:154px;font-size:15.5px;color:#fff;transform:scaleX(0.9800)">1</span>
<span class="t" style="left:934.51px;top:154px;font-size:15.5px;color:#111;transform:scaleX(0.9800)">2</span>
<span class="t" style="left:967.79px;top:154px;font-size:15.5px;color:#111;transform:scaleX(0.9800)">3</span>
<span class="t" style="left:990.09px;top:154px;font-size:15.5px;color:#333;transform:scaleX(1.0695)">...</span>
<span class="t" style="left:1015.50px;top:154px;font-size:15.5px;color:#111;transform:scaleX(1.0000)">23</span>
<span class="t" style="left:1057.70px;top:154px;font-size:15.5px;color:#111;transform:scaleX(1.0000)">24</span>
<span class="t" style="left:1101.32px;top:156px;font-size:15px;color:#8c8c8c;transform:scaleX(1.0737)">a.log</span>
</div>
<div id="sb"></div><div id="th"></div>
<svg class="ic" style="left:1353.5px;top:1.7px" width="8" height="5" viewBox="0 0 8 5"><path d="M0.2 4.4 L3.9 0.2 L7.6 4.4 Z" fill="#a3a3a3"/></svg>
</div>
</body></html>
